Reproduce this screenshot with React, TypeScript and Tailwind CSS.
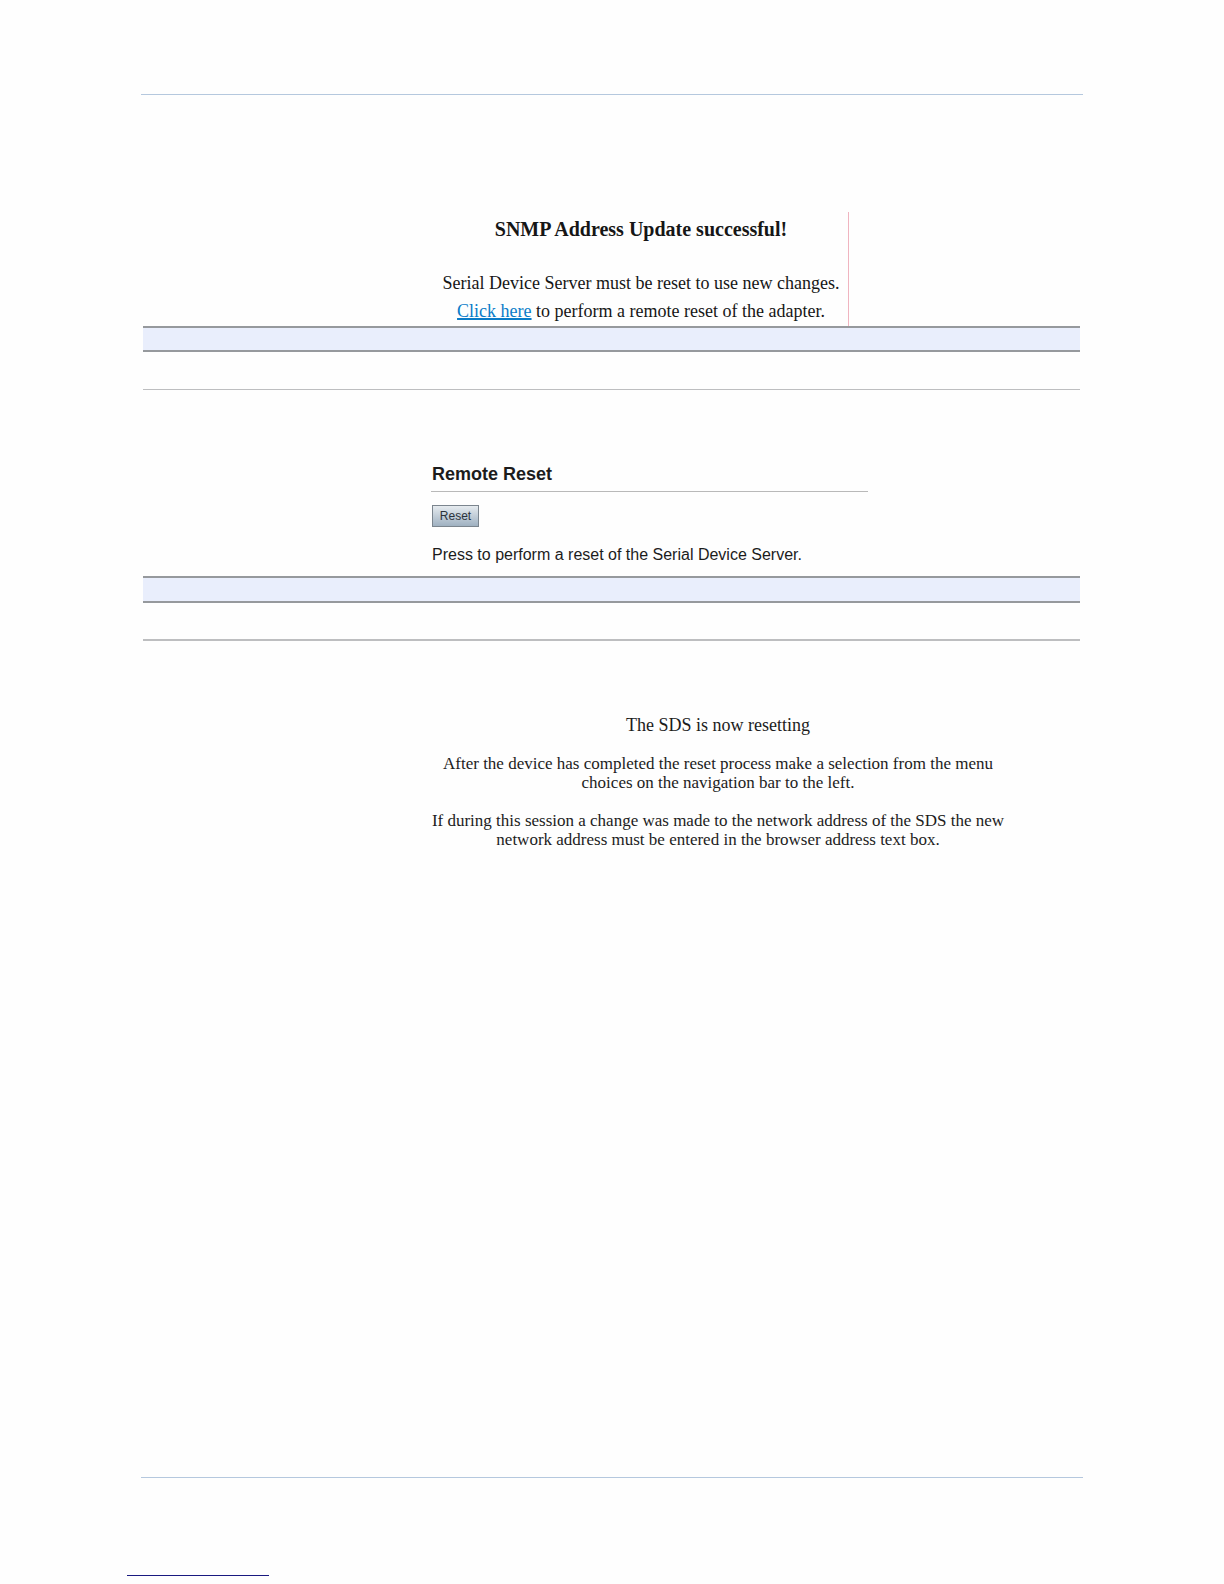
import type { ReactNode } from "react"

const Band = ({ heavy = false } : {
    heavy?: boolean
}) => {
    return (
        <div className="mr-[3px] ml-[2px]">
            <div className={"border-y-2 border-[#96999d] bg-[#e9eefc] " + `${heavy ? 'h-[27px]' : 'h-[26px]'}`}></div>
            <div className={"h-[38px] border-[#bdbec0] " + `${heavy ? 'border-b-2' : 'border-b'}`}></div>
        </div>
    )
}

const Panel = ({ className, children } : {
    className: string,
    children: ReactNode
}) => {
    return (
        <section className={"ml-[290px] whitespace-nowrap " + className}>
            {children}
        </section>
    )
}

const SnmpUpdate = () => {
    return (
        <Panel className="mt-[117px] w-[418px] border-r border-[#f0b4c0] pt-[3px] pb-px pl-[3px] text-center font-['Liberation_Serif',serif] text-[18px] leading-7 text-[#161616]">
            <h2 className="mb-[26px] text-[20px] leading-7 font-bold">SNMP Address Update successful!</h2>
            <p>Serial Device Server must be reset to use new changes.</p>
            <p>
                <a href="#reset" className="text-[#0a7cc8] underline decoration-2">Click here</a> to perform a remote reset of the adapter.
            </p>
        </Panel>
    )
}

const RemoteReset = () => {
    return (
        <Panel className="mt-[72px] mb-[9px] w-[437px] font-['Liberation_Sans',sans-serif] text-[16px] leading-6 text-[#1c1c1c]">
            <h2 id="reset" className="border-b border-[#b9b9b9] pb-[5px] pl-px text-[18px] leading-6 font-bold">Remote Reset</h2>
            <div className="flex flex-col items-start gap-4 pt-[13px] pl-px">
                <button
                    type="button"
                    className="h-[22px] w-[47px] border border-[#7b858e] bg-linear-to-b from-[#e6ebef] to-[#9fb1c1] text-[12px] leading-5 text-[#2b333b]"
                >
                    Reset
                </button>
                <p>Press to perform a reset of the Serial Device Server.</p>
            </div>
        </Panel>
    )
}

const Resetting = () => {
    return (
        <Panel className="mt-[74px] w-[574px] text-center font-['Liberation_Serif',serif] text-[17px] leading-[19px] text-[#1c1c1c]">
            <h2 className="mb-[19px] text-[18px] leading-5">The SDS is now resetting</h2>
            <p className="mb-[19px]">
                After the device has completed the reset process make a selection from the menu
                <br />
                choices on the navigation bar to the left.
            </p>
            <p>
                If during this session a change was made to the network address of the SDS the new
                <br />
                network address must be entered in the browser address text box.
            </p>
        </Panel>
    )
}

export default function App() {
    return (
        <div className="flex min-h-screen flex-col bg-[#fefefe] px-[141px] pt-[94px]">
            <main className="flex-1 border-t border-[#b5c8de]">
                <SnmpUpdate />
                <Band />
                <RemoteReset />
                <Band heavy />
                <Resetting />
            </main>
            <footer className="h-[107px] border-t border-[#b5c8de] pt-[97px]">
                <div className="-ml-[14px] w-[142px] border-t border-[#1a1a80]"></div>
            </footer>
        </div>
    )
}
